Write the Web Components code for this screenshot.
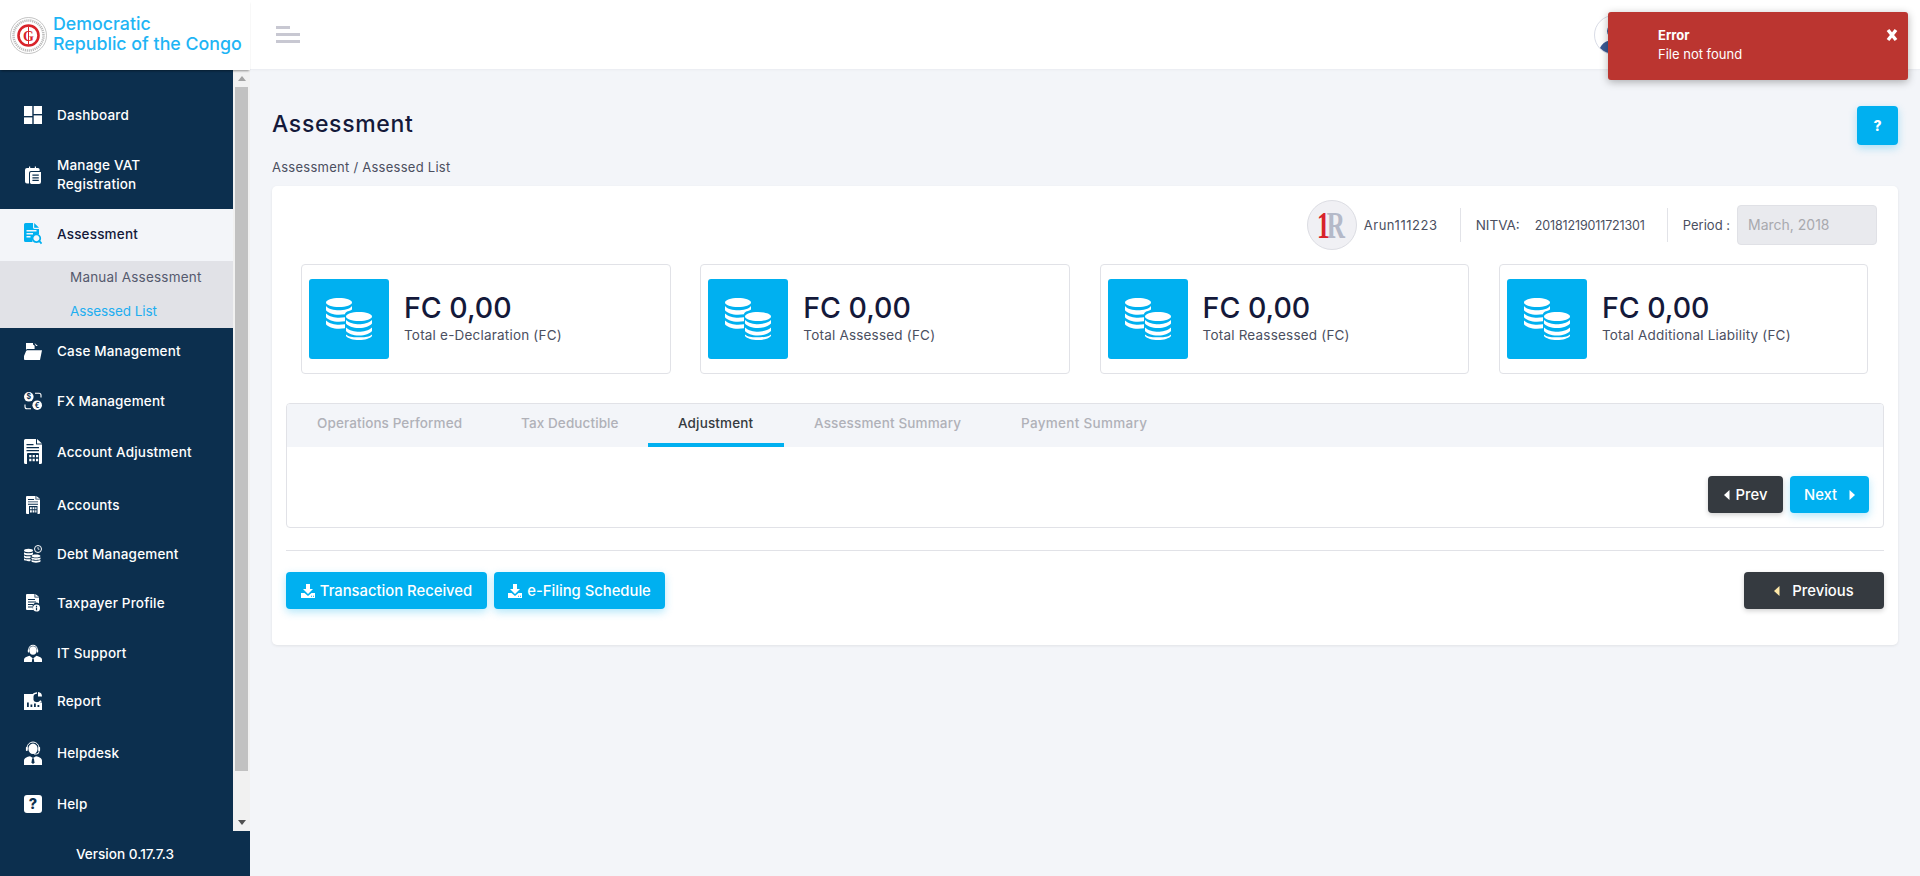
<!DOCTYPE html>
<html lang="en">
<head>
<meta charset="utf-8">
<title>Assessment</title>
<style>
html,body{margin:0;height:876px;overflow:hidden;background:#f3f5f9;font-family:Inter,"Noto Sans",sans-serif;color:#14193a}
</style>
</head>
<body>
<app-shell>
  <side-nav slot="side">
    <nav-item icon="dash" h="90">Dashboard</nav-item>
    <nav-item icon="vat" h="49" pb="20">Manage VAT<br>Registration</nav-item>
    <nav-item icon="assess" h="52" pb="2" active>Assessment</nav-item>
    <sub-menu>
      <sub-item style="letter-spacing:.2px">Manual Assessment</sub-item>
      <sub-item active style="letter-spacing:-.1px">Assessed List</sub-item>
    </sub-menu>
    <nav-item icon="case" h="46">Case Management</nav-item>
    <nav-item icon="fx" h="54">FX Management</nav-item>
    <nav-item icon="adj" h="48">Account Adjustment</nav-item>
    <nav-item icon="acc" h="58">Accounts</nav-item>
    <nav-item icon="debt" h="40">Debt Management</nav-item>
    <nav-item icon="tax" h="58">Taxpayer Profile</nav-item>
    <nav-item icon="it" h="42">IT Support</nav-item>
    <nav-item icon="report" h="54">Report</nav-item>
    <nav-item icon="desk" h="50">Helpdesk</nav-item>
    <nav-item icon="help" h="52">Help</nav-item>
  </side-nav>
  <top-bar slot="top"></top-bar>
  <page-head title-text="Assessment" crumb="Assessment / Assessed List"></page-head>
  <main-card>
    <info-bar user="Arun111223" nitva="20181219011721301" period="March, 2018"></info-bar>
    <stat-row>
      <stat-card value="FC 0,00" label="Total e-Declaration (FC)"></stat-card>
      <stat-card value="FC 0,00" label="Total Assessed (FC)"></stat-card>
      <stat-card value="FC 0,00" label="Total Reassessed (FC)"></stat-card>
      <stat-card value="FC 0,00" label="Total Additional Liability (FC)"></stat-card>
    </stat-row>
    <tab-panel></tab-panel>
    <action-bar></action-bar>
  </main-card>
  <toast-msg slot="toast" heading="Error" message="File not found"></toast-msg>
</app-shell>
<script>
const ICONS = {
  dash:[18,18,'<rect width="8.3" height="10"/><rect x="9.7" width="8.3" height="8"/><rect y="11.4" width="8.3" height="6.6"/><rect x="9.7" y="9.4" width="8.3" height="8.6"/>'],
  vat:[16,18,'<path d="M2 2h2V.6h1.2V2h4.6V.6H11V2h2a1.6 1.6 0 0 1 1.6 1.6V5H6a2 2 0 0 0-2 2v10.6H2A2 2 0 0 1 0 15.6V4a2 2 0 0 1 2-2z"/><path fill-rule="evenodd" d="M6.4 6H16v10a2 2 0 0 1-2 2H6.4a1.4 1.4 0 0 1-1.4-1.4V7.4A1.4 1.4 0 0 1 6.4 6zM7.4 8.6v1.2h6.4V8.6zm0 2.6v1.2h6.4v-1.2zm0 2.6V15h6.4v-1.2z"/>'],
  assess:[18,22,'<path d="M0 1.5A1.5 1.5 0 0 1 1.5 0H9v4.6A1.4 1.4 0 0 0 10.4 6H15v5.2a5.6 5.6 0 0 0-6.4 7.8H1.5A1.5 1.5 0 0 1 0 17.500zM2.500 7v1.400h10V7zm0 3v1.400h6.500V10zm0 3v1.400h4V13z"/><path d="M10.200 0 15 4.800h-4.800z"/><path fill="none" stroke="currentColor" stroke-width="1.700" d="M12.400 11.500a3.800 3.800 0 1 0 .01 0zM15.200 17.800l2.300 2.800"/>'],
  case:[18,17,'<path d="M2 0h7v1.500l1.600 1.300V6H3.500a1.500 1.500 0 0 0-1.500 1.100zM10.500 0l3.300 3H12z"/><path d="M3.600 7.200H18l-2 9.800H0.900a.9.900 0 0 1-.9-.9V13l2-4.800a1.500 1.500 0 0 1 1.600-1z"/>'],
  fx:[18,18,'<circle cx="4.800" cy="4.800" r="4.800"/><circle cx="13.200" cy="13.200" r="4.800"/><path fill="none" stroke="currentColor" stroke-width="1.100" d="M11 1.200h4a2 2 0 0 1 2 2v2.300M7 16.800H3a2 2 0 0 1-2-2v-2.400"/><text x="4.800" y="7.300" text-anchor="middle" font-size="7" font-weight="700" fill="#0c2f4e" font-family="Inter">$</text><text x="13.200" y="15.700" text-anchor="middle" font-size="7" font-weight="700" fill="#0c2f4e" font-family="Inter">€</text>'],
  adj:[18,26,'<path d="M1.500 0H12v5.500h6V23.500a1.500 1.500 0 0 1-1.500 1.500H1.500A1.500 1.500 0 0 1 0 23.500V1.500A1.500 1.500 0 0 1 1.500 0z"/><path d="M13 0l5 4.500h-5z"/><path fill="#0c2f4e" d="M2.500 5h7v1.200h-7zM2.500 8h12.500v1.200H2.500zM2.500 11h12.500v1.200H2.500z"/><path fill-rule="evenodd" fill="#0c2f4e" d="M4 14h10a1 1 0 0 1 1 1v10H3V15a1 1 0 0 1 1-1zm1.200 2v2.200h2.200V16zm3.400 0v2.200h2.200V16zm3.400 0v2.200h2.200V16zm-6.800 3.700v2.600h2.200v-2.600zm3.400 0v2.600h2.200v-2.600zm3.400 0v2.600h2.200v-2.600z"/>'],
  acc:[14,18,'<path d="M1 0h8.500v3.400H14V17a1 1 0 0 1-1 1H1a1 1 0 0 1-1-1V1a1 1 0 0 1 1-1z"/><path d="M10.300 0 14 2.700h-3.700z"/><path fill="#0c2f4e" d="M2 3h6v.9H2zM2 5.400h10v.9H2zM2 7.800h10v.9H2z"/><path fill-rule="evenodd" fill="#0c2f4e" d="M3 10h8.500v8H3zm1 1.200v2h1.800v-2zm2.600 0v2h1.800v-2zm2.600 0v2h1.300v-2zM4 14.300V16.500h1.800v-2.200zm2.600 0V16.500h1.800v-2.200zm2.600 0V16.500h1.300v-2.200z"/>'],
  debt:[18,18,'<ellipse cx="4.500" cy="5.500" rx="4.500" ry="1.700"/><path d="M0 7.200c1 1.300 8 1.300 9 0v2c-1 1.300-8 1.300-9 0zM0 10.200c1 1.300 6 1.300 6.500.9v2c-.5.400-5.500.4-6.500-.9zM0 13.200c1 1.300 6 1.300 6.500.9v1.800c-.5.400-5.500.4-6.500-.900z"/><path d="M7.500 12.600c1 1 8 1 9 0v1.400c-1 1.200-8 1.200-9 0zM7.500 15c1 1 8 1 9 0v1.500c-1 1.500-8 1.500-9 0zM12 9.500c2.500 0 4.500.6 4.500 1.500s-2 1.500-4.500 1.500-4.500-.6-4.500-1.500 2-1.500 4.500-1.500z"/><circle cx="14" cy="4" r="3.500" fill="none" stroke="currentColor" stroke-width="1"/><path fill="none" stroke="currentColor" stroke-width=".8" d="M14 2v2.200h1.500"/>'],
  tax:[14,18,'<path d="M1 0h7.500v3.500H13v6a4 4 0 0 0-4.800 6.500H1a1 1 0 0 1-1-1V1a1 1 0 0 1 1-1z"/><path d="M9.300 0 13 2.700H9.300z"/><path fill="#0c2f4e" d="M2 5h7v1H2zM2 7.500h8v1H2zM2 10h5v1H2zM2 12.500h4v1H2z"/><path fill-rule="evenodd" d="M10.500 10.500a3.500 3.500 0 1 1 0 7 3.500 3.500 0 0 1 0-7zm-.6 1.200v1.200h1.200v-1.200zm0 1.900v2.600h1.200v-2.600z"/>'],
  it:[18,18,'<path fill="none" stroke="currentColor" stroke-width="1.100" d="M4.800 6.800V5.500a4.200 4.200 0 0 1 8.400 0v1.300"/><ellipse cx="9" cy="6.500" rx="3.500" ry="4.300"/><rect x="3.800" y="5.400" width="1.600" height="3" rx=".6"/><rect x="12.600" y="5.400" width="1.600" height="3" rx=".6"/><path d="M0 18v-2.500c0-2 2.500-3 5.500-3.800L9 14.500l3.500-2.800c3 .8 5.500 1.800 5.500 3.800V18z"/><path fill="#0c2f4e" d="M8.300 14.500h1.400l.5 3.500H7.800z"/>'],
  report:[18,18,'<path d="M0 2h9.500v8.500H18V18H0z"/><path fill="none" stroke="currentColor" stroke-width="1.700" d="M13 1a5 5 0 1 0 4 7.700"/><path d="M14 0a4.500 4.500 0 0 1 4 4.500h-4z"/><path fill="#0c2f4e" d="M3 10.500h1.800V15H3zM6.500 12.500h1.800V15H6.500zM10 11.500h1.800V15H10zM13.500 13h1.800v2h-1.800z"/>'],
  desk:[18,24,'<path fill="none" stroke="currentColor" stroke-width="1" d="M3 8.500V7a6 6 0 0 1 12 0v3.500a2.500 2.500 0 0 1-2.500 2.500H10"/><ellipse cx="9" cy="7.800" rx="4.600" ry="5.300"/><rect x="1.900" y="6" width="1.800" height="4" rx=".7"/><rect x="14.300" y="6" width="1.800" height="4" rx=".7"/><path d="M0 24v-4.500c0-2.500 3-3.800 6-4.300L9 17l3-1.800c3 .5 6 1.800 6 4.300V24z"/><path fill="#0c2f4e" d="M8.200 17.300h1.600l.7 4-1.500 2-1.500-2z"/>'],
  help:[18,18,'<rect width="18" height="18" rx="3"/><text x="9" y="14.400" text-anchor="middle" font-size="14.500" font-weight="800" fill="#0c2f4e" font-family="Inter">?</text>']
};
const svgIcon = n => { const [w,h,b]=ICONS[n]; return `<svg width="${w}" height="${h}" viewBox="0 0 ${w} ${h}" fill="currentColor" aria-hidden="true">${b}</svg>`; };
const COINS = `<svg width="48" height="42" viewBox="0 0 48 42" fill="#fff" aria-hidden="true">
<path d="M14 0c7 0 13 2 13 4.500S21 9 14 9 1 7 1 4.500 7 0 14 0z"/>
<path d="M1 8c2 3 8 4.300 13 4.300S25 11 27 8v3.500c-1 .6-2.500 1.300-3 1.500-3 .6-4 2-4 3.300-2 .3-4 .5-6 .5-6 0-11-2-13-4.500z"/>
<path d="M1 15.500c3 3 9 4.200 13 4.200 2 0 4-.2 6-.5v4c-2 .3-4 .5-6 .5-6 0-11-2-13-4.500z"/>
<path d="M1 22.500c3 3 9 4.200 13 4.200 2 0 4-.2 6-.5v4c-2 .3-4 .5-6 .5-6 0-11-2-13-4.500z"/>
<path d="M34 14c7 0 13 2 13 4.500S41 23 34 23s-13-2-13-4.500S27 14 34 14z"/>
<path d="M21 22c3 3 9 4.200 13 4.200s10-1.200 13-4.200v3.500c-2 2.500-7 4.500-13 4.500s-11-2-13-4.500z"/>
<path d="M21 29.500c3 3 9 4.200 13 4.200s10-1.200 13-4.200v3.500c-2 2.500-7 4.500-13 4.500s-11-2-13-4.500z"/>
<path d="M21 36.500c3 3 9 2.700 13 2.700s10 .3 13-2.700v1.500c-2 2.500-7 4-13 4s-11-1.500-13-4z"/></svg>`;
const DL = `<svg width="14" height="14" viewBox="0 0 14 14" fill="#fff" aria-hidden="true"><path d="M5 0h4v5h3L7 10 2 5h3z"/><path fill-rule="evenodd" d="M0 9h3.500L7 12l3.500-3H14v5H0zm10 2.800v1h1v-1zm2 0v1h1v-1z"/></svg>`;
const TRI = d => `<svg width="6" height="10" viewBox="0 0 6 10" fill="currentColor" aria-hidden="true"><path d="${d==='l'?'M5.500 0v10L0 5z':'M.5 0v10L6 5z'}"/></svg>`;

function def(name, render){
  customElements.define(name, class extends HTMLElement{
    constructor(){super();this.attachShadow({mode:'open'});}
    connectedCallback(){this.shadowRoot.innerHTML=render(this);}
  });
}

def('app-shell',()=>`<style>
:host{display:grid;grid-template-columns:250px 1fr;grid-template-rows:70px 806px;width:1920px;height:876px;position:relative;overflow:hidden}
.side{grid-row:1/3;grid-column:1;min-height:0}
.top{grid-row:1;grid-column:2}
.content{grid-row:2;grid-column:2;padding:36px 22px 0;box-sizing:border-box;min-width:0}
</style>
<div class="side"><slot name="side"></slot></div>
<div class="top"><slot name="top"></slot></div>
<div class="content"><slot></slot></div>
<slot name="toast"></slot>`);

def('side-nav',()=>`<style>
:host{display:flex;flex-direction:column;width:250px;height:876px;background:#0c2f4e}
.logo{height:70px;background:#fff;display:flex;align-items:center;gap:6px;padding-left:10px;box-sizing:border-box;box-shadow:0 2px 2px -1px rgba(0,0,0,.4);position:relative;z-index:1;flex:none}
.name{color:#1fb5f5;font-size:17.800px;line-height:20px;font-weight:500;white-space:nowrap;margin-top:-2px}
.mid{display:flex;height:761px;flex:none}
.list{width:233px;display:flex;flex-direction:column;flex:none}
.bar{width:17px;background:#f1f1f1;position:relative;display:flex;flex-direction:column;flex:none}
.arr{height:17px;display:flex;align-items:center;justify-content:center;flex:none}
.thumb{height:684px;margin:0 2px;background:#c1c1c1;flex:none}
.fill{flex:1}
.ver{flex:1;display:flex;align-items:center;justify-content:center;color:#fff;font-size:13.600px;font-weight:500}
</style>
<div class="logo">
<svg width="37" height="37" viewBox="0 0 37 37" aria-hidden="true"><circle cx="18.500" cy="18.500" r="18" fill="#fff" stroke="#aaa" stroke-width=".7"/><circle cx="18.500" cy="18.500" r="15" fill="none" stroke="#bbb" stroke-width="2.500" stroke-dasharray="1.200 .8"/><circle cx="18.500" cy="18.500" r="10" fill="none" stroke="#d8232a" stroke-width="2.600"/><text x="18.500" y="23.500" text-anchor="middle" font-size="14" font-weight="700" fill="#d8232a" font-family="Liberation Serif">G</text><path d="M18.500 9.500v18" stroke="#d8232a" stroke-width="1"/></svg>
<div class="name">Democratic<br>Republic of the Congo</div></div>
<div class="mid"><div class="list"><slot></slot></div>
<div class="bar"><div class="arr"><svg width="8" height="5" viewBox="0 0 8 5"><path d="M4 0l4 5H0z" fill="#a3a3a3"/></svg></div><div class="thumb"></div><div class="fill"></div><div class="arr"><svg width="8" height="5" viewBox="0 0 8 5"><path d="M0 0h8L4 5z" fill="#505050"/></svg></div></div></div>
<div class="ver">Version 0.17.7.3</div>`);

def('nav-item',e=>`<style>
:host{display:flex;align-items:center;height:${e.getAttribute('h')}px;padding-bottom:${e.getAttribute('pb')||0}px;flex:none;background:${e.hasAttribute('active')?'#f3f5f9':'transparent'};color:${e.hasAttribute('active')?'#14193a':'#fff'};box-sizing:border-box}
.ic{width:18px;margin-left:24px;margin-right:15px;display:flex;justify-content:center;color:${e.hasAttribute('active')?'#00b0f0':'#fff'};flex:none}
svg{display:block}
.t{font-size:13.500px;font-weight:500;line-height:19px;white-space:nowrap;letter-spacing:.18px}
</style><span class="ic">${svgIcon(e.getAttribute('icon'))}</span><span class="t"><slot></slot></span>`);

def('sub-menu',()=>`<style>:host{display:flex;flex-direction:column;height:67px;background:#e1e2e7;flex:none;justify-content:center}</style><slot></slot>`);
def('sub-item',e=>`<style>:host{display:block;height:33.500px;line-height:33.500px;padding-left:70px;font-size:13.500px;color:${e.hasAttribute('active')?'#1eaef0':'#555a6e'}}</style><slot></slot>`);

def('top-bar',()=>`<style>
:host{display:flex;align-items:center;justify-content:space-between;height:70px;background:#fff;box-sizing:border-box;border-bottom:1px solid #eceef3;padding-left:26px;box-shadow:0 0 3px rgba(0,0,0,.03)}
.av{width:40px;height:40px;border-radius:50%;border:1px solid #d9dce6;box-sizing:border-box;margin-right:286px;background:#fff;overflow:hidden;display:flex;align-items:center}
</style>
<svg width="24" height="17" viewBox="0 0 24 17" fill="#c8c8d2" aria-hidden="true"><rect width="14" height="3"/><rect y="7" width="24" height="3"/><rect y="14" width="24" height="3"/></svg>
<div class="av"><svg width="38" height="38" viewBox="0 0 38 38" aria-hidden="true"><circle cx="19" cy="15" r="7" fill="#3b5a94"/><path d="M4 38c0-10 7-14 15-14s15 4 15 14z" fill="#3b5a94"/></svg></div>`);

def('page-head',e=>`<style>
:host{display:block}
.r{display:flex;justify-content:space-between;align-items:center;height:39px}
h1{margin:-4px 0 0;font-size:23px;font-weight:500;color:#14193a;letter-spacing:.65px}
.b{width:41px;height:39px;background:#00b0f0;border-radius:4px;color:#fff;font-weight:800;font-size:14px;display:flex;align-items:center;justify-content:center;box-shadow:0 3px 8px rgba(0,176,240,.3)}
.c{font-size:13px;color:#4b4f5f;height:41px;line-height:44px;letter-spacing:.26px}
</style><div class="r"><h1>${e.getAttribute('title-text')}</h1><div class="b">?</div></div><div class="c">${e.getAttribute('crumb')}</div>`);

def('main-card',()=>`<style>:host{display:block;background:#fff;border-radius:5px;height:459px;padding:14px 14px 0;box-sizing:border-box;box-shadow:0 1px 3px rgba(0,0,0,.08)}</style><slot></slot>`);

def('info-bar',e=>`<style>
:host{display:flex;align-items:center;justify-content:flex-end;height:50px;padding-right:7px;font-size:13px;color:#4b4f5f}
.av{width:50px;height:50px;border-radius:50%;border:1px solid #dcdde3;box-sizing:border-box;background:#f0f0f4;display:flex;align-items:center;justify-content:center;margin-right:7px;font-family:"Liberation Serif",serif;font-weight:700;font-size:37px;line-height:1;overflow:hidden}
.m{display:block;transform:scaleX(.68);white-space:nowrap;letter-spacing:-4px;margin-right:4px}
.one{color:#d8232a;position:relative;z-index:1}.r{color:#b4b9c8}
.div{width:1px;height:34px;background:#e2e3e8}
.u{letter-spacing:.55px;margin-right:22px}
.n{font-size:13.500px;margin:0 15px 0 15px}
.d{font-size:12.500px;letter-spacing:-.14px;margin-right:22px}
.pl{margin-left:15px;font-size:13px}
.p{width:140px;height:40px;border:1px solid #e0e1e6;border-radius:4px;background:#e9eaee;box-sizing:border-box;padding-left:10px;line-height:38px;color:#a8a9ae;font-size:14px;margin-left:7px}
</style><div class="av"><span class="m"><span class="one">1</span><span class="r">R</span></span></div><span class="u">${e.getAttribute('user')}</span><span class="div"></span><span class="n">NITVA:</span><span class="d">${e.getAttribute('nitva')}</span><span class="div"></span><span class="pl">Period :</span><span class="p">${e.getAttribute('period')}</span>`);

def('stat-row',()=>`<style>:host{display:grid;grid-template-columns:repeat(4,369.500px);column-gap:29.800px;margin:14px 0 0 15px}</style><slot></slot>`);
def('stat-card',e=>`<style>
:host{display:flex;align-items:center;height:110px;border:1px solid #e1e2e7;border-radius:4px;box-sizing:border-box;padding-left:7px;background:#fff}
.i{width:80px;height:80px;background:#00b0f0;border-radius:3px;display:flex;align-items:center;justify-content:center;flex:none;margin-right:15px}
.v{font-size:28.500px;line-height:36px;color:#14193a;font-weight:500;white-space:nowrap;margin-top:-3px}
.l{font-size:13.500px;color:#4b4f5f;line-height:20px;white-space:nowrap;letter-spacing:.2px;margin-top:-1px}
</style><div class="i">${COINS}</div><div><div class="v">${e.getAttribute('value')}</div><div class="l">${e.getAttribute('label')}</div></div>`);

def('ui-btn',e=>{const d=e.hasAttribute('dark');return `<style>
:host{display:inline-flex;align-items:center;justify-content:center;gap:${e.getAttribute('gap')||5}px;width:${e.getAttribute('w')}px;height:37px;box-sizing:border-box;border-radius:4px;background:${d?'#353a40':'#00b0f0'};color:#fff;font-size:14.800px;font-weight:500;white-space:nowrap;flex:none;box-shadow:${d?'0 2px 5px rgba(0,0,0,.18)':'0 3px 8px rgba(0,176,240,.3)'}}
svg{display:block}
</style><slot></slot>`});

def('tab-panel',()=>{
 const tabs=[['Operations Performed',204,.1],['Tax Deductible',157,.1],['Adjustment',136,.15],['Assessment Summary',207,.15],['Payment Summary',180,.3]];
 return `<style>
:host{display:block;height:125px;border:1px solid #e1e2e7;border-radius:4px;margin-top:29px;box-sizing:border-box;overflow:hidden}
.h{display:flex;height:43px;background:#f3f5f9}
.t{display:flex;align-items:center;height:43px;box-sizing:border-box;padding-left:30px;padding-bottom:6px;font-size:13.500px;color:#b0b1b8;font-weight:500;white-space:nowrap;flex:none}
.a{color:#353a40;border-bottom:4px solid #00b0f0;padding-bottom:2px}
.b{display:flex;justify-content:flex-end;gap:7px;padding:29px 14px 0 0}
</style><div class="h">${tabs.map((t,i)=>`<div class="t${i==2?' a':''}" style="width:${t[1]}px;letter-spacing:${t[2]}px">${t[0]}</div>`).join('')}</div>
<div class="b"><ui-btn dark w="75" gap="6">${TRI('l')}<span>Prev</span></ui-btn><ui-btn w="79" gap="12"><span>Next</span>${TRI('r')}</ui-btn></div>`});

def('action-bar',()=>`<style>
:host{display:block;margin-top:22px;border-top:1px solid #e1e2e7;padding-top:21px}
.r{display:flex;gap:7px}.s{flex:1}
</style><div class="r"><ui-btn w="201">${DL}<span>Transaction Received</span></ui-btn><ui-btn w="171">${DL}<span>e-Filing Schedule</span></ui-btn><span class="s"></span><ui-btn dark w="140" gap="12"><span style="color:#ffe9a8;display:flex">${TRI('l')}</span><span>Previous</span></ui-btn></div>`);

def('toast-msg',e=>`<style>
:host{display:block;position:absolute;left:1608px;top:12px;width:300px;height:68px;background:#bb3530;border-radius:3px;color:#fff;box-shadow:0 2px 8px rgba(0,0,0,.3);box-sizing:border-box;padding:14px 0 0 50px;font-size:13px;line-height:19px}
b{display:block;font-weight:700;font-size:13px}
.x{position:absolute;right:10px;top:16px}
</style><b>${e.getAttribute('heading')}</b><div>${e.getAttribute('message')}</div>
<svg class="x" width="12" height="14" viewBox="0 0 12 14" aria-hidden="true"><path d="M2 2l8 10M10 2L2 12" stroke="#fff" stroke-width="3.400"/></svg>`);
</script>
</body>
</html>
